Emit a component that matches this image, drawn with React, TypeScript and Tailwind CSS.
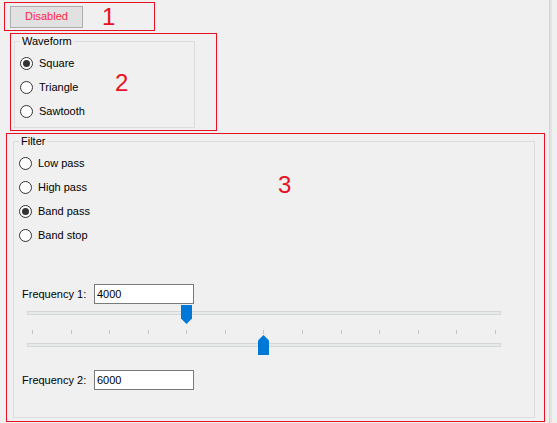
import React from "react";

const red = "border-[#e81123]";

function Radio({ label, checked }: { label: string; checked?: boolean }) {
  return (
    <div className="flex items-center h-[24px]">
      <span className="w-[13px] h-[13px] rounded-full border border-[#333333] bg-white flex items-center justify-center">
        {checked && <span className="w-[7px] h-[7px] rounded-full bg-[#333333]" />}
      </span>
      <span className="ml-[6px]">{label}</span>
    </div>
  );
}

function GroupBox({ title, className, children }: { title: string; className: string; children: React.ReactNode }) {
  return (
    <fieldset className={`border border-[#dcdcdc] ${className}`}>
      <legend className="ml-[5px] px-[2px] leading-[14px]">{title}</legend>
      {children}
    </fieldset>
  );
}

// value 0..12000, ticks each 1000
function thumbLeft(v: number) {
  return 5 + (v / 1000) * 38.58 - 5.5;
}

function Slider({ value, up }: { value: number; up?: boolean }) {
  return (
    <div className={`relative w-[474px] ${up ? "h-[20px] pt-[8px]" : "h-[19px] pt-[6px]"}`}>
      <div className="h-[4px] border border-[#d6d6d6] bg-[#e7eaea]" />
      <svg
        className="absolute top-0"
        style={{ left: thumbLeft(value) }}
        width="11"
        height={up ? 20 : 19}
        viewBox={up ? "0 0 11 20" : "0 0 11 19"}
      >
        {up ? (
          <path d="M5.5 0 L11 5.5 V20 H0 V5.5 Z" fill="#0078d7" />
        ) : (
          <path d="M0 0 H11 V13.5 L5.5 19 L0 13.5 Z" fill="#0078d7" />
        )}
      </svg>
    </div>
  );
}

function FreqRow({ label, value }: { label: string; value: string }) {
  return (
    <div className="flex items-center h-[20px] pl-[8px]">
      <span className="w-[72px]">{label}</span>
      <div className="w-[100px] h-[20px] border border-[#7a7a7a] bg-white pl-[2px] flex items-center">{value}</div>
    </div>
  );
}

export default function App() {
  const ticks = Array.from({ length: 13 }, (_, i) => i);
  return (
    <div className="w-[557px] h-[423px] bg-[#f0f0f0] flex overflow-hidden text-[11px] text-black font-['Liberation_Sans',Arial,sans-serif]">
      <div className="w-[549px] flex flex-col">
        <div className={`mt-[2px] ml-[4px] w-[151px] h-[29px] border ${red} flex items-center`}>
          <button className="ml-[5px] w-[73px] h-[22px] bg-[#e1e1e1] border border-[#adadad] text-[#ff1e45]">
            Disabled
          </button>
          <span className="ml-[19px] text-[24px] leading-[24px] text-[#e81123]">1</span>
        </div>

        <div className={`mt-[2px] ml-[10px] w-[207px] h-[98px] border ${red} pl-[3px]`}>
          <GroupBox title="Waveform" className="w-[181px] h-[94px]">
            <div className="flex pt-[3px] pl-[5px]">
              <div className="w-[95px]">
                <Radio label="Square" checked />
                <Radio label="Triangle" />
                <Radio label="Sawtooth" />
              </div>
              <span className="mt-[20px] text-[24px] leading-[24px] text-[#e81123]">2</span>
            </div>
          </GroupBox>
        </div>

        <div className={`mt-[2px] ml-[6px] w-[539px] h-[289px] border ${red} pl-[6px]`}>
          <GroupBox title="Filter" className="w-[522px] h-[284px]">
            <div className="flex pt-[3px] pl-[5px]">
              <div className="w-[95px]">
                <Radio label="Low pass" />
                <Radio label="High pass" />
                <Radio label="Band pass" checked />
                <Radio label="Band stop" />
              </div>
              <span className="ml-[164px] mt-[22px] text-[24px] leading-[24px] text-[#e81123]">3</span>
            </div>

            <div className="mt-[37px]">
              <FreqRow label="Frequency 1:" value="4000" />
            </div>
            <div className="mt-[1px] ml-[13px]">
              <Slider value={4000} />
              <div className="mt-[6px] w-[474px] h-[4px] px-[5px] flex justify-between">
                {ticks.map((t) => (
                  <span key={t} className="w-[1px] h-[4px] bg-[#c4c4c4]" />
                ))}
              </div>
              <div className="mt-[1px]">
                <Slider value={6000} up />
              </div>
            </div>
            <div className="mt-[15px]">
              <FreqRow label="Frequency 2:" value="6000" />
            </div>
          </GroupBox>
        </div>
      </div>
      <div className="w-[1px] bg-[#d4d4d4]" />
      <div className="w-[2px] bg-[#e3e3e3]" />
    </div>
  );
}
